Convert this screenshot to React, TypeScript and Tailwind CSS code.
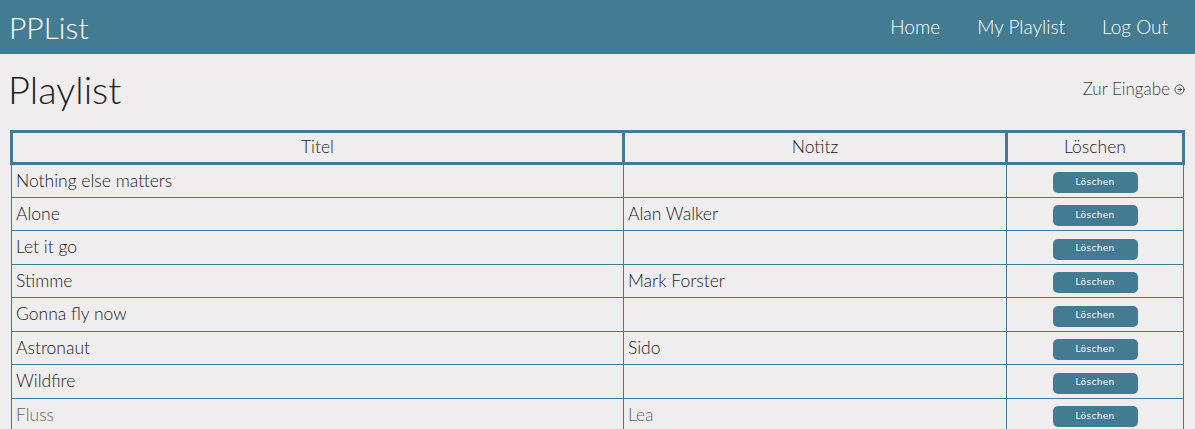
import { CircleArrowRight } from "lucide-react";

const songs = [
  { title: "Nothing else matters", note: "" },
  { title: "Alone", note: "Alan Walker" },
  { title: "Let it go", note: "" },
  { title: "Stimme", note: "Mark Forster" },
  { title: "Gonna fly now", note: "" },
  { title: "Astronaut", note: "Sido" },
  { title: "Wildfire", note: "" },
  { title: "Fluss", note: "Lea" },
];

const navLinks = ["Home", "My Playlist", "Log Out"];

const App = () => {
  return (
    <div className="min-h-screen bg-[#efedee] font-['Lato',sans-serif] font-light text-[#222]">
      <nav className="h-[54px] bg-[#437c92] flex items-center justify-between pl-[9px] pr-[27px] text-white">
        <div className="text-[30px] leading-none">PPList</div>
        <div className="flex gap-[37px] text-[19px]">
          {navLinks.map((link) => (
            <a key={link} href="#" className="text-white">
              {link}
            </a>
          ))}
        </div>
      </nav>

      <div className="px-[10px]">
        <div className="flex items-center justify-between h-[72px]">
          <h1 className="text-[38px] leading-none -ml-[2px] -mt-[3px]">Playlist</h1>
          <a href="#" className="flex items-center gap-1 text-[17px] text-[#444] -mt-[2px]">
            Zur Eingabe
            <CircleArrowRight size={11} strokeWidth={2} />
          </a>
        </div>

        <table className="w-full border-collapse mt-[4px]">
          <thead>
            <tr className="h-[32px]">
              <th className="w-[612px] border-[3px] border-[#437c92] font-light text-[17.5px]">Titel</th>
              <th className="w-[383px] border-[3px] border-[#437c92] font-light text-[17.5px]">Notitz</th>
              <th className="border-[3px] border-[#437c92] font-light text-[17.5px]">Löschen</th>
            </tr>
          </thead>
          <tbody>
            {songs.map((song, index) => {
              const faded = index === songs.length - 1 ? "text-[#6a6464]" : "";
              return (
                <tr key={index} className="h-[33.5px]">
                  <td className={`border border-[#437c92] px-[4px] text-[17.5px] ${faded}`}>{song.title}</td>
                  <td className={`border border-[#437c92] px-[4px] text-[17.5px] ${faded}`}>{song.note}</td>
                  <td className="border border-[#437c92] text-center">
                    <button className="w-[85px] h-[21px] rounded-[5px] bg-[#437c92] text-white text-[9px] font-normal tracking-[0.3px] font-['DejaVu_Sans',sans-serif] align-middle">
                      Löschen
                    </button>
                  </td>
                </tr>
              );
            })}
          </tbody>
        </table>
      </div>
    </div>
  );
};

export default App;
